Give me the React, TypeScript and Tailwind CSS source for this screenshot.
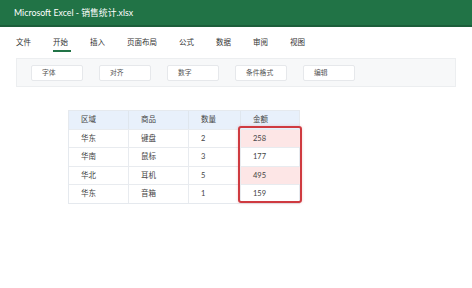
import React from "react";

const font = { fontFamily: '"Lato", "Noto Sans CJK SC", sans-serif' };

const tabs = ["文件", "开始", "插入", "页面布局", "公式", "数据", "审阅", "视图"];
const groups = ["字体", "对齐", "数字", "条件格式", "编辑"];
const rows = [
  ["华东", "键盘", "2", "258"],
  ["华南", "鼠标", "3", "177"],
  ["华北", "耳机", "5", "495"],
  ["华东", "音箱", "1", "159"],
];

export default function App() {
  return (
    <div
      className="w-[472px] h-[288px] bg-white overflow-hidden text-[#444]"
      style={{ fontFamily: '"Lato", "Noto Sans CJK SC", sans-serif' }}
    >
      <div className="h-[27px] bg-[#217346] border-b-2 border-[#1c5e3a] flex items-center pl-[14px] text-white text-[8.8px]">
        Microsoft Excel - 销售统计.xlsx
      </div>
      <div className="h-[31px] flex items-center pl-[16px] gap-[22px] text-[7.5px] text-[#333]">
        {tabs.map((t) => (
          <div key={t} className="relative">
            {t}
            {t === "开始" && (
              <div className="absolute left-0 top-[13px] w-[18px] h-[2px] bg-[#217346]" />
            )}
          </div>
        ))}
      </div>
      <div className="ml-[16px] w-[440px] h-[29px] bg-[#f7f8f9] border border-[#eceef0] flex items-center pl-[14px] gap-[16px]">
        {groups.map((g) => (
          <div
            key={g}
            className="w-[52px] h-[16px] bg-white border border-[#e6e8eb] rounded-[2px] flex items-center pl-[10px] text-[6.8px] text-[#555]"
          >
            {g}
          </div>
        ))}
      </div>
      <div className="ml-[68px] mt-[23px] relative w-[232px]" style={font}>
        <div className="border border-[#e5e9ee] text-[7.5px]">
          <div className="grid grid-cols-[60px_60px_52px_60px] h-[18px] bg-[#e8f0fb]">
            {["区域", "商品", "数量", "金额"].map((h, i) => (
              <div
                key={h}
                className={`flex items-center pl-[12px] ${i < 3 ? "border-r border-[#dfe6ee]" : ""}`}
              >
                {h}
              </div>
            ))}
          </div>
          {rows.map((r, ri) => (
            <div
              key={ri}
              className="grid grid-cols-[60px_60px_52px_60px] h-[18.4px] border-t border-[#e8ebef]"
            >
              {r.map((c, i) => (
                <div
                  key={i}
                  className={`flex items-center pl-[12px] ${i < 3 ? "border-r border-[#e8ebef]" : ""} ${
                    i === 3 && ri % 2 === 0 ? "bg-[#fde6e6]" : ""
                  }`}
                >
                  {c}
                </div>
              ))}
            </div>
          ))}
        </div>
        <div className="absolute left-[170px] top-[16px] w-[64px] h-[77px] border-2 border-[#cf3a40] rounded-[3px] shadow-[0_0_3px_rgba(207,58,64,0.25)]" />
      </div>
    </div>
  );
}
